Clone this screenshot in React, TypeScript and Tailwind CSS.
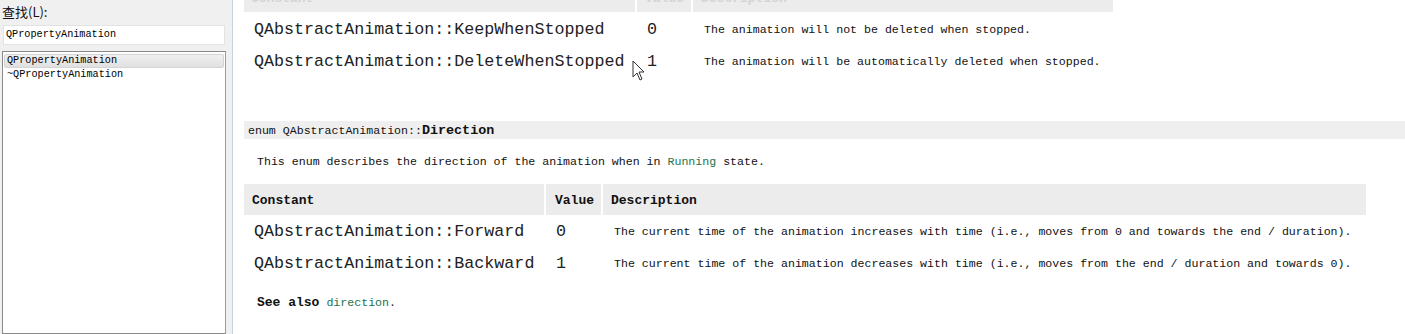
import React from "react"

const mono = "font-['Liberation_Mono',monospace]"
const cjk = "font-['Noto_Sans_CJK_SC',sans-serif]"

const topRows = [
  { name: "QAbstractAnimation::KeepWhenStopped", value: "0", desc: "The animation will not be deleted when stopped." },
  { name: "QAbstractAnimation::DeleteWhenStopped", value: "1", desc: "The animation will be automatically deleted when stopped." },
]

const dirRows = [
  {
    name: "QAbstractAnimation::Forward",
    value: "0",
    desc: "The current time of the animation increases with time (i.e., moves from 0 and towards the end / duration).",
  },
  {
    name: "QAbstractAnimation::Backward",
    value: "1",
    desc: "The current time of the animation decreases with time (i.e., moves from the end / duration and towards 0).",
  },
]

function Cursor() {
  return (
    <svg className="absolute left-[632px] top-[60px]" width="14" height="22" viewBox="0 0 14 22">
      <path d="M1 1 L1 17 L5 13 L8 20 L10 19 L7 12 L12 12 Z" fill="#fff" stroke="#333" strokeWidth="1" strokeLinejoin="round" />
    </svg>
  )
}

function EnumRow({ name, value, desc }: { name: string; value: string; desc: string }) {
  return (
    <>
      <div className={`${mono} text-[16.7px] text-[#222] pl-[10px] pt-[2px] h-[32px] flex items-center`}>{name}</div>
      <div className={`${mono} text-[16.7px] text-[#222] pl-[10px] pt-[2px] h-[32px] flex items-center`}>{value}</div>
      <div className={`${mono} text-[11.6px] text-[#111] pl-[11px] pt-[1px] h-[32px] flex items-center`}>{desc}</div>
    </>
  )
}

export default function App() {
  return (
    <div className="relative flex w-[1405px] h-[334px] overflow-hidden bg-white">
      {/* left search panel */}
      <div className="w-[233px] shrink-0 bg-[#f0f0f0] flex flex-col border-r border-[#c8d2de]">
        <div className={`${cjk} text-[13px] leading-[16px] text-[#111] pl-[2px] pt-[4px]`}>查找(L):</div>
        <div className="mt-[5px] ml-[3px] w-[222px] h-[20px] bg-white border border-[#e3e3e3] flex items-center">
          <span className={`${mono} text-[10.2px] text-black pl-[2px]`}>QPropertyAnimation</span>
        </div>
        <div className="mt-[6px] ml-[2px] w-[224px] flex-1 bg-white border border-[#8a8a8a] border-r-[#9a9a9a] pt-[2px] px-[1px]">
          <div className="h-[14px] flex items-center rounded-[2px] border border-[#d4d4d4] bg-gradient-to-b from-[#f0f0f0] to-[#e0e0e0]">
            <span className={`${mono} text-[10.2px] text-black pl-[2px]`}>QPropertyAnimation</span>
          </div>
          <div className="h-[14px] flex items-center">
            <span className={`${mono} text-[10.2px] text-black pl-[3px]`}>~QPropertyAnimation</span>
          </div>
        </div>
      </div>

      {/* documentation page */}
      <div className="flex-1 pl-[11px] flex flex-col">
        <div className="grid grid-cols-[391px_54px_420px] gap-x-[2px] w-[869px]">
          <div className="h-[12px] bg-[#ececec] overflow-hidden">
            <div className={`${mono} font-bold text-[13px] text-[#d4d4d4] pl-[7px] -mt-[11px]`}>Constant</div>
          </div>
          <div className="h-[12px] bg-[#ececec] overflow-hidden">
            <div className={`${mono} font-bold text-[13px] text-[#d4d4d4] pl-[8px] -mt-[11px]`}>Value</div>
          </div>
          <div className="h-[12px] bg-[#ececec] overflow-hidden">
            <div className={`${mono} font-bold text-[13px] text-[#d4d4d4] pl-[8px] -mt-[11px]`}>Description</div>
          </div>
          <div className="h-[1px] col-span-3" />
          {topRows.map((r) => (
            <EnumRow key={r.name} {...r} />
          ))}
        </div>

        <div className="mt-[44px] h-[18px] bg-[#efefef] flex items-center pl-[4px] pt-[2px]">
          <span className={`${mono} text-[11.6px] text-[#111]`}>enum QAbstractAnimation::</span>
          <span className={`${mono} text-[13.4px] font-bold text-[#111]`}>Direction</span>
        </div>

        <p className={`${mono} text-[11.6px] leading-[16px] text-[#111] pl-[13px] mt-[15px]`}>
          This enum describes the direction of the animation when in <span className="text-[#21734f]">Running</span> state.
        </p>

        <div className="mt-[14px] grid grid-cols-[300px_55px_763px] gap-x-[2px] w-[1122px]">
          <div className={`${mono} font-bold text-[13px] text-[#111] bg-[#ececec] h-[31px] flex items-center pl-[8px] pt-[2px]`}>Constant</div>
          <div className={`${mono} font-bold text-[13px] text-[#111] bg-[#ececec] h-[31px] flex items-center pl-[9px] pt-[2px]`}>Value</div>
          <div className={`${mono} font-bold text-[13px] text-[#111] bg-[#ececec] h-[31px] flex items-center pl-[8px] pt-[2px]`}>Description</div>
          {dirRows.map((r) => (
            <EnumRow key={r.name} {...r} />
          ))}
        </div>

        <p className={`${mono} text-[11.6px] leading-[16px] text-[#111] pl-[13px] mt-[16px]`}>
          <span className="font-bold text-[13px]">See also</span> <span className="text-[#21734f]">direction</span>.
        </p>
      </div>

      <Cursor />
    </div>
  )
}
